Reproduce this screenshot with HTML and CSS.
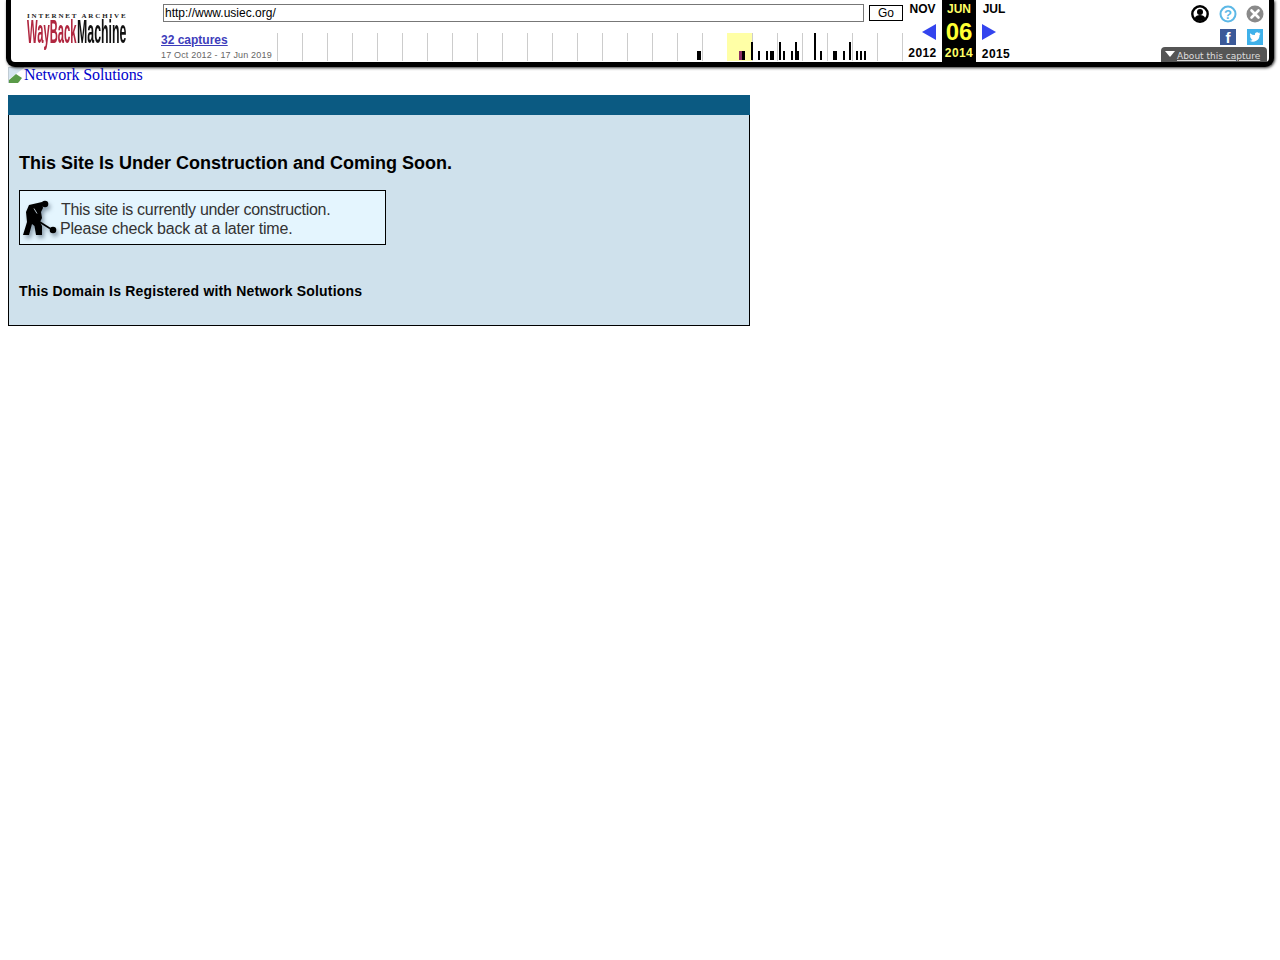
FILE: index.html
```html
<!DOCTYPE html>
<html lang="en">
<head>
<meta charset="utf-8">
<title>Network Solutions</title>
<link rel="stylesheet" href="styles.css">
</head>
<body>
<header class="toolbar">
  <a class="logo" href="#" aria-label="Wayback Machine">
    <span class="logo-top">INTERNET ARCHIVE</span>
    <span class="logo-words">
      <span class="logo-cell"><span class="logo-word logo-way">WayBack</span></span>
      <span class="logo-cell"><span class="logo-word logo-mac">Machine</span></span>
    </span>
  </a>
  <div class="center">
    <form class="url-row">
      <input class="url" type="text" value="http://www.usiec.org/">
      <button class="go" type="button">Go</button>
    </form>
    <div class="stats">
      <div class="caps">
        <a href="#">32 captures</a>
        <span>17 Oct 2012 - 17 Jun 2019</span>
      </div>
      <div class="spark">
        <i class="now"></i>
        <b style="left:420px;height:9px;width:4px"></b>
        <b class="pink" style="left:462px;height:9px;width:3px"></b>
        <b style="left:465px;height:9px;width:3px"></b>
        <b style="left:474px;height:18px;width:2px"></b>
        <b style="left:481px;height:9px;width:2px"></b>
        <b style="left:489px;height:9px;width:2px"></b>
        <b style="left:493px;height:9px;width:4px"></b>
        <b style="left:502px;height:18px;width:2px"></b>
        <b style="left:506px;height:9px;width:2px"></b>
        <b style="left:514px;height:9px;width:2px"></b>
        <b style="left:518px;height:18px;width:2px"></b>
        <b style="left:520px;height:9px;width:2px"></b>
        <b style="left:537px;height:27px;width:2px"></b>
        <b style="left:543px;height:9px;width:2px"></b>
        <b style="left:556px;height:9px;width:4px"></b>
        <b style="left:566px;height:9px;width:2px"></b>
        <b style="left:572px;height:18px;width:2px"></b>
        <b style="left:579px;height:9px;width:2px"></b>
        <b style="left:583px;height:9px;width:2px"></b>
        <b style="left:587px;height:9px;width:2px"></b>
      </div>
    </div>
  </div>
  <div class="cal">
    <div class="month prev"><a href="#">NOV</a><span class="arrow"><svg width="14" height="16" viewBox="0 0 14 16"><path class="arr" d="M14 0v16L0 8z"/></svg></span><strong>2012</strong></div>
    <div class="month cur"><a href="#">JUN</a><span class="day">06</span><strong>2014</strong></div>
    <div class="month next"><a href="#">JUL</a><span class="arrow"><svg width="14" height="16" viewBox="0 0 14 16"><path class="arr" d="M0 0v16L14 8z"/></svg></span><strong>2015</strong></div>
  </div>
  <div class="tools">
    <div class="tool-row">
      <svg width="18" height="18" viewBox="0 0 18 18"><circle cx="9" cy="9" r="7.700" fill="#fff" stroke="#000" stroke-width="2.400"/><circle cx="9" cy="7" r="3" fill="#000"/><path d="M3.600 13.600c1-2.800 3-3.600 5.400-3.600s4.400.8 5.400 3.600A7.500 7.500 0 0 1 3.600 13.600z" fill="#000"/></svg>
      <svg width="18" height="18" viewBox="0 0 18 18"><circle cx="9" cy="9" r="7.500" fill="#fff" stroke="#5cb8e6" stroke-width="2"/><text x="9" y="13.500" class="q">?</text></svg>
      <svg class="close" width="18" height="18" viewBox="0 0 18 18"><circle cx="9" cy="9" r="8.500" fill="#8a8a8a"/><path d="M5.500 5.500l7 7m0-7l-7 7" stroke="#fff" stroke-width="2.600" stroke-linecap="round"/></svg>
    </div>
    <div class="social">
      <span class="fb">f</span>
      <svg class="tw" width="16" height="16" viewBox="0 0 16 16"><rect width="16" height="16" fill="#3fb1ea"/><path d="M13.500 4.400c-.4.200-.9.300-1.300.4.500-.3.800-.7 1-1.300-.4.300-.9.400-1.400.5a2.300 2.300 0 0 0-3.900 2.100A6.400 6.400 0 0 1 3.200 4.200a2.300 2.300 0 0 0 .7 3c-.4 0-.7-.1-1-.3 0 1.100.8 2 1.800 2.300-.3.100-.7.100-1 0 .3.900 1.100 1.500 2.100 1.600a4.600 4.600 0 0 1-3.300.9 6.500 6.500 0 0 0 10-5.800c.4-.3.700-.6 1-1.500z" fill="#fff"/></svg>
    </div>
  </div>
  <a class="about" href="#"><svg width="10" height="6" viewBox="0 0 10 6"><path d="M0 0h10L5 6z" fill="#fff"/></svg><span>About this capture</span></a>
</header>

<main class="page">
  <a class="brand" href="#"><svg class="broken" width="16" height="16" viewBox="0 0 16 16"><path d="M0 0h16v1H1v15H0z" fill="#c0ccd4"/><path d="M1 1h15L8 7l-7 5z" fill="#d6e4f0"/><path d="M1 16v-3l7-6 6 4-4 5z" fill="#5a9a48"/></svg>Network Solutions</a>
  <section class="panel">
    <div class="panel-bar"></div>
    <div class="panel-body">
      <h1>This Site Is Under Construction and Coming Soon.</h1>
      <div class="notice">
        <svg class="digger" width="42" height="44" viewBox="0 0 42 44">
          <circle cx="25" cy="6" r="3.300"/>
          <path d="M9 7l13-3 1 6-2 4 1 6-2 4 2 4v9h-6l-1.500-9-2.500-2-3 11H3l4-13-1-10z"/>
          <path d="M14 10.500l3 5" stroke="#e4f5fe" stroke-width=".8"/>
          <path d="M15 21l15 9.500" stroke="#000" stroke-width="1.600" fill="none"/>
          <circle cx="33" cy="32" r="3.300"/>
        </svg>
        <p>This site is currently under construction.<br><span class="second">Please check back at a later time.</span></p>
      </div>
      <h2>This Domain Is Registered with Network Solutions</h2>
    </div>
  </section>
</main>
</body>
</html>
```

FILE: styles.css
```css
html, body {
  margin: 0;
  padding: 0;
  background: #fff;
}

body {
  font-family: "Liberation Sans", Arial, sans-serif;
  color: #000;
}

.toolbar {
  position: relative;
  box-sizing: border-box;
  display: flex;
  width: 1268px;
  height: 67px;
  margin: 0 0 0 6px;
  background: #fff;
  border: solid #000;
  border-width: 0 5px 5px;
  border-radius: 0 0 9px 9px;
  box-shadow: 1px 1px 3px #333;
}

.logo {
  display: block;
  flex: none;
  width: 150px;
  padding: 12px 0 0 16px;
  box-sizing: border-box;
  text-decoration: none;
}

.logo-top {
  display: block;
  font: bold 7px/8px "Liberation Serif", serif;
  letter-spacing: 1.850px;
  color: #222;
  white-space: nowrap;
}

.logo-words {
  display: flex;
  height: 27px;
}

.logo-cell {
  display: block;
  flex: none;
  width: 50px;
  height: 27px;
}

.logo-word {
  display: inline-block;
  font: bold 33px/24px "Liberation Sans", sans-serif;
  transform-origin: 0 0;
  white-space: nowrap;
}

.logo-way {
  color: #b0263f;
  transform: scaleX(.34);
}

.logo-mac {
  color: #111;
  transform: scaleX(.374);
}

.center {
  flex: none;
  width: 744px;
}

.url-row {
  display: flex;
  align-items: center;
  gap: 5px;
  height: 26px;
  padding: 0 0 0 2px;
  margin: 0;
  box-sizing: border-box;
}

.url {
  box-sizing: border-box;
  width: 701px;
  height: 18px;
  padding: 0 1px;
  margin: 0;
  font: 12px "Liberation Sans", sans-serif;
  color: #000;
  border: 1px solid #777;
  outline: 0;
  background: #fff;
}

.go {
  box-sizing: border-box;
  width: 34px;
  height: 16px;
  padding: 0;
  font: 12px "Liberation Sans", sans-serif;
  color: #000;
  background: #fff;
  border: 1px solid #000;
}

.stats {
  display: flex;
  height: 36px;
}

.caps {
  flex: none;
  width: 116px;
  padding-top: 7px;
  box-sizing: border-box;
}

.caps a {
  display: block;
  font: bold 12px/14px "Liberation Sans", sans-serif;
  color: #3d3dbb;
  text-decoration: underline;
}

.caps span {
  display: block;
  margin-top: 2px;
  font: 9px/12px "Liberation Sans", sans-serif;
  letter-spacing: .17px;
  color: #666;
  white-space: nowrap;
}

.spark {
  position: relative;
  flex: none;
  width: 626px;
  height: 28px;
  margin-top: 7px;
  background: repeating-linear-gradient(to right, #ccc 0, #ccc 1px, transparent 1px, transparent 25px);
}

.now {
  position: absolute;
  left: 450px;
  top: 0;
  bottom: 0;
  width: 25px;
  background: #ffffa6;
}

.spark b {
  position: absolute;
  bottom: 1px;
  background: #000;
}

.spark .pink {
  background: #8c2f63;
}

.cal {
  display: flex;
  flex: none;
  height: 62px;
}

.month {
  display: flex;
  flex-direction: column;
  align-items: center;
  width: 36px;
  font: bold 12px/14px "Liberation Sans", sans-serif;
}

.month a {
  display: block;
  height: 18px;
  padding-top: 2px;
  box-sizing: border-box;
  color: #000;
  text-decoration: none;
}

.month strong {
  display: block;
  color: #000;
  letter-spacing: .4px;
}

.arrow {
  display: flex;
  align-items: center;
  justify-content: center;
  height: 28px;
}

.prev {
  width: 37px;
}

.prev a,
.prev strong {
  margin-right: 2px;
}

.prev .arrow {
  margin-left: 11px;
}

.next .arrow {
  margin-right: 10px;
}

.next strong {
  margin: 1px 0 0 4px;
}

.arr {
  fill: #3344ee;
}

.cur {
  width: 34px;
  background: #000;
}

.cur a {
  color: #ffff66;
}

.cur strong {
  color: #ffff66;
}

.day {
  display: block;
  height: 28px;
  font: bold 24px/28px "Liberation Sans", sans-serif;
  color: #ffff33;
}

.tools {
  display: flex;
  flex-direction: column;
  align-items: flex-end;
  flex: 1;
  padding: 5px 5px 0 0;
  box-sizing: border-box;
}

.tool-row {
  display: flex;
  gap: 10px;
}

.tool-row svg {
  display: block;
}

.tool-row .close {
  margin-left: -1px;
}

.q {
  font: bold 13px "Liberation Sans", sans-serif;
  fill: #5cb8e6;
  text-anchor: middle;
}

.social {
  display: flex;
  gap: 11px;
  margin-top: 6px;
  margin-right: 1px;
}

.fb {
  display: block;
  width: 16px;
  height: 16px;
  font: bold 15px/18px "Liberation Sans", sans-serif;
  color: #fff;
  text-align: center;
  background: #3b5998;
  overflow: hidden;
}

.tw {
  display: block;
}

.about {
  position: absolute;
  right: 2px;
  top: 47px;
  display: flex;
  align-items: flex-start;
  gap: 2px;
  box-sizing: border-box;
  width: 106px;
  height: 15px;
  padding: 4px 0 0 4px;
  background: #555;
  border-radius: 4px 4px 0 0;
  text-decoration: none;
}

.about span {
  font: 9px/10px "DejaVu Sans", sans-serif;
  color: #ddd;
  text-decoration: underline;
  white-space: nowrap;
}

.page {
  padding: 0 8px;
}

.brand {
  display: block;
  height: 28px;
  font: 16px/16px "Liberation Serif", serif;
  letter-spacing: -.1px;
  color: #00c;
  text-decoration: none;
  white-space: nowrap;
}

.broken {
  vertical-align: -3px;
}

.panel {
  box-sizing: border-box;
  width: 742px;
  height: 231px;
  background: #cfe1ec;
  border: 1px solid #000;
  border-top: 0;
}

.panel-bar {
  height: 20px;
  margin: 0 -1px;
  background: #0b5a82;
}

.panel-body {
  padding: 0 10px;
}

h1 {
  margin: 0;
  padding-top: 38px;
  font: bold 18px/21px "Liberation Sans", sans-serif;
}

.notice {
  display: flex;
  box-sizing: border-box;
  width: 367px;
  height: 55px;
  margin-top: 16px;
  background: #e4f5fe;
  border: 1px solid #000;
}

.digger {
  flex: none;
  margin-top: 7px;
  filter: drop-shadow(2px 3px 2px rgba(70, 90, 110, .6));
}

.notice p {
  margin: 9px 0 0 -1px;
  font: 16px/19px "Liberation Sans", sans-serif;
  letter-spacing: -.3px;
  color: #333;
  white-space: nowrap;
}

.second {
  margin-left: -1px;
  letter-spacing: -.2px;
}

h2 {
  margin: 0;
  padding-top: 37px;
  font: bold 14px/18px "Liberation Sans", sans-serif;
  letter-spacing: .18px;
}
```
